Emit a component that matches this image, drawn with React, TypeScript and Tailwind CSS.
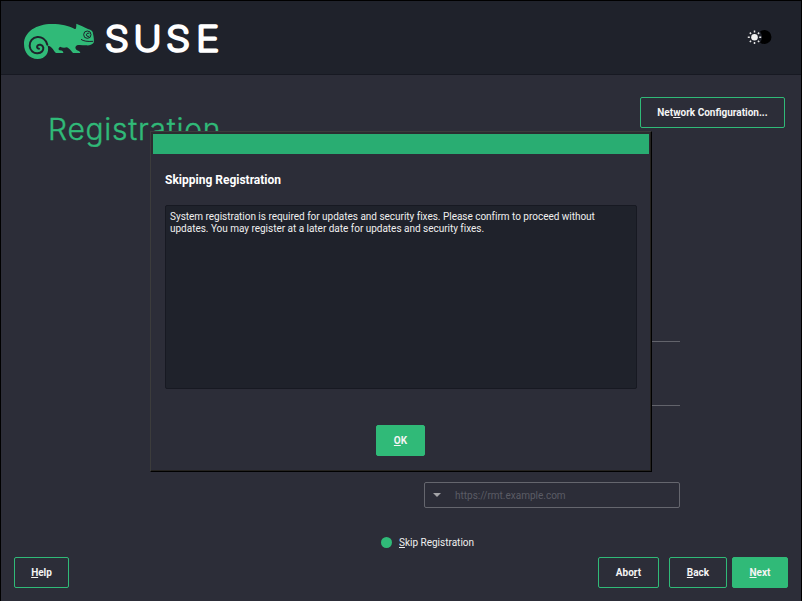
import type { ReactNode } from "react";

function Key({ children }: { children: ReactNode }) {
  return <span className="underline decoration-1 underline-offset-[1px]">{children}</span>;
}

function Button({ className, filled, children }: { className: string; filled?: boolean; children: ReactNode }) {
  const tone = filled ? "bg-[#30ba78]" : "";
  return (
    <button
      className={`flex h-[31px] items-center justify-center rounded-[2px] border border-[#30ba78] pb-px text-[10px] font-bold text-[#f4f4f4] ${tone} ${className}`}
    >
      <span>{children}</span>
    </button>
  );
}

function Logo() {
  return (
    <svg className="ml-[22px] mt-[9px] h-[63px] w-[200px]" viewBox="69 30 600 189">
      <path
        fill="#30ba78"
        d="M229 71C240 76 254 81 264 87C274 90 279 93 279 101C281 110 283 120 281 128C275 135 267 137 259 136C248 136 238 134 231 136C225 139 225 145 229 149C234 152 240 153 241 159L219 159C213 152 207 145 201 142C194 144 187 144 180 140C175 144 174 148 178 151C184 152 190 152 190 159L168 159C163 156 160 147 155 143C152 139 148 137 143 137C149 157 136 177 113 177C88 177 72 158 72 132C72 95 110 72 155 72C185 72 205 77 224 87C229 88 229 80 229 71Z"
      />
      <path
        fill="none"
        stroke="#1f222b"
        strokeWidth="6"
        strokeLinecap="round"
        d="M142 134C137 117 124 110 112 111C98 112 88 124 89 138C90 152 101 161 113 160C124 159 131 152 130 143C128 133 115 132 112 138C110 142 112 146 117 146"
      />
      <circle cx="262" cy="104" r="11" fill="none" stroke="#1f222b" strokeWidth="3" />
      <path d="M268 101a5 5 0 1 0 0 7" fill="none" stroke="#1f222b" strokeWidth="3" />
      <path d="M243 118Q254 126 279 124" fill="none" stroke="#1f222b" strokeWidth="3" />
      <g
        fill="#fff"
        stroke="#fff"
        strokeWidth="10.5"
        strokeLinejoin="round"
        fontFamily="Inter, sans-serif"
        fontSize="102"
        fontWeight="100"
      >
        <text x="315" y="153.5" textLength="71" lengthAdjust="spacingAndGlyphs">S</text>
        <text x="402" y="153.5" textLength="81" lengthAdjust="spacingAndGlyphs">U</text>
        <text x="499" y="153.5" textLength="71" lengthAdjust="spacingAndGlyphs">S</text>
        <text x="589" y="153.5" textLength="68" lengthAdjust="spacingAndGlyphs">E</text>
      </g>
    </svg>
  );
}

function ThemeToggle() {
  return (
    <svg className="mr-[29px] mt-[27px] h-[18px] w-[26px]" viewBox="0 0 26 18">
      <path d="M14 3.6A7 7 0 1 1 14 14.4Q18 9 14 3.6Z" fill="#000" />
      <circle cx="8.5" cy="9.3" r="3.3" fill="#f2f2f2" />
      <path
        d="M8.5 2.6v2M8.5 14v2M1.8 9.3h2M13.2 9.3h2M3.8 4.6l1.3 1.3M11.9 12.7l1.3 1.3M3.8 14l1.3-1.3M11.9 5.9l1.3-1.3"
        stroke="#e4e4e4"
        strokeWidth="1.5"
      />
    </svg>
  );
}

function Dialog() {
  return (
    <section className="absolute left-[149px] top-[130px] h-[341px] w-[502px] border border-b-black border-l-[#3c3c3c] border-r-black border-t-[#3c3c3c] bg-[#2c2d38]">
      <div className="flex h-full flex-col border-b border-r border-[#24221f]">
        <div className="h-[22px] border-l-2 border-r border-t-2 border-[#2b2c30] bg-[#29ad72]" />
        <h2 className="ml-[14px] mt-[18px] h-[16px] text-[12px] font-bold leading-[16px] text-white">
          Skipping Registration
        </h2>
        <div className="ml-[14px] mt-[17px] h-[184px] w-[472px] rounded-[2px] border border-[#171922] bg-[#1f222b] px-1 pt-[5px] text-[10px] leading-[12px] tracking-[-0.02px] text-[#efefef]">
          <p className="whitespace-nowrap">
            System registration is required for updates and security fixes. Please confirm to proceed without
            <br />
            updates. You may register at a later date for updates and security fixes.
          </p>
        </div>
        <Button filled className="ml-[225px] mt-[36px] w-[49px]">
          <Key>O</Key>K
        </Button>
      </div>
    </section>
  );
}

export default function App() {
  return (
    <div className="relative flex h-[601px] w-[802px] flex-col overflow-hidden border border-b-0 border-black bg-[#2c2d38] font-[Roboto,sans-serif]">
      <header className="flex h-[74px] shrink-0 items-start justify-between border-b border-[#171922] bg-[#1f222b]">
        <Logo />
        <ThemeToggle />
      </header>
      <div className="flex h-[107px] shrink-0 items-start justify-between pl-[47px] pr-[16px]">
        <h1 className="mt-[32px] whitespace-nowrap font-[Inter,sans-serif] text-[30px] font-light leading-[44px] tracking-[0.75px] text-[#30ba78] [-webkit-text-stroke:0.4px_#30ba78]">
          Registration
        </h1>
        <Button className="mt-[22px] w-[145px]">
          Net<Key>w</Key>ork Configuration...
        </Button>
      </div>
      <main className="flex grow flex-col">
        <div className="ml-[423px] mt-[159px] h-px w-[256px] bg-[#62636b]" />
        <div className="ml-[423px] mt-[63px] h-px w-[256px] bg-[#62636b]" />
        <div className="ml-[423px] mt-[76px] flex h-[26px] w-[256px] items-center rounded-[2px] border border-[#65666e] text-[10px] text-[#5b5c65]">
          <span className="ml-[8px] border-x-4 border-t-4 border-x-transparent border-t-[#a4a4a8]" />
          <span className="ml-[14px]">https://rmt.example.com</span>
        </div>
        <div className="ml-[380px] mt-[27px] flex h-[14px] items-center text-[10px] text-[#f0f0f0]">
          <span className="size-[11px] rounded-full bg-[#30ba78]" />
          <span className="ml-[7px]">
            <Key>S</Key>kip Registration
          </span>
        </div>
      </main>
      <footer className="flex h-[44px] shrink-0 items-start px-[13px]">
        <Button className="w-[55px]">
          <Key>H</Key>elp
        </Button>
        <Button className="ml-auto w-[61px]">
          Abo<Key>r</Key>t
        </Button>
        <Button className="ml-[10px] w-[58px]">
          <Key>B</Key>ack
        </Button>
        <Button filled className="ml-[5px] w-[56px]">
          <Key>N</Key>ext
        </Button>
      </footer>
      <Dialog />
    </div>
  );
}
